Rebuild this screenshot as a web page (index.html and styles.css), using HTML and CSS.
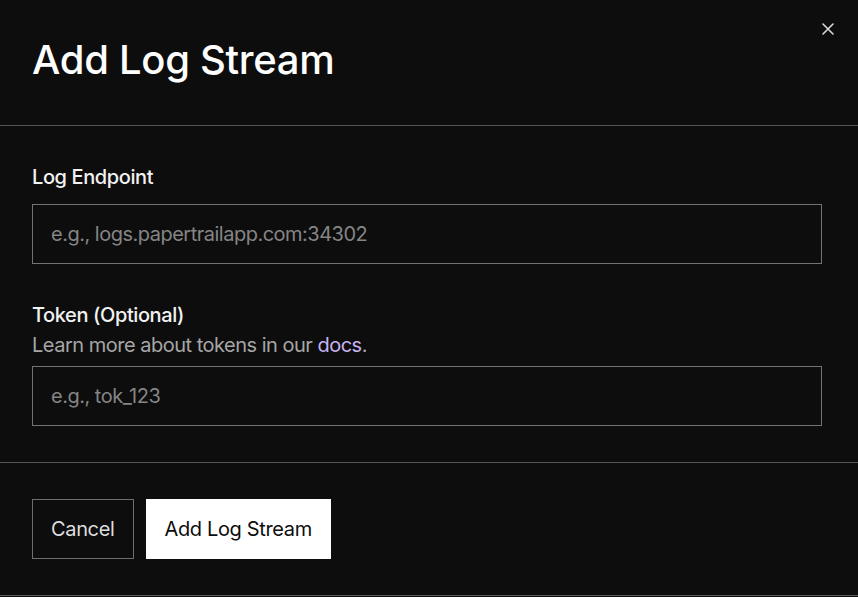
FILE: index.html
```
<!DOCTYPE html>
<html lang="en">
<head>
<meta charset="utf-8">
<title>Add Log Stream</title>
<link rel="stylesheet" href="styles.css">
</head>
<body>
<div class="modal">
  <header class="modal-header">
    <h1 class="modal-title">Add Log Stream</h1>
    <button class="close-btn" aria-label="Close">
      <svg width="14" height="14" viewBox="0 0 14 14"><path d="M2 2L12 12M12 2L2 12" stroke="#d8d8d8" stroke-width="1.6" fill="none" stroke-linecap="round"/></svg>
    </button>
  </header>
  <div class="modal-body">
    <div class="field">
      <label class="field-label">Log Endpoint</label>
      <input class="field-input" type="text" placeholder="e.g., logs.papertrailapp.com:34302">
    </div>
    <div class="field">
      <label class="field-label">Token (Optional)</label>
      <p class="field-help">Learn more about tokens in our <a class="link" href="#">docs</a>.</p>
      <input class="field-input" type="text" placeholder="e.g., tok_123">
    </div>
  </div>
  <footer class="modal-footer">
    <button class="btn btn-secondary">Cancel</button>
    <button class="btn btn-primary">Add Log Stream</button>
  </footer>
</div>
</body>
</html>
```
FILE: styles.css
```
* { box-sizing: border-box; }
html, body {
  margin: 0;
  padding: 0;
  background: #0d0d0d;
  font-family: Inter, "Noto Sans", sans-serif;
  color: #ffffff;
}
.modal {
  width: 858px;
  background: #0d0d0d;
  border-bottom: 1px solid #5a5a5a;
}
.modal-header {
  position: relative;
  padding: 36px 32px 41px;
  border-bottom: 1px solid #555555;
}
.modal-title {
  margin: 0;
  font-size: 40px;
  line-height: 48px;
  font-weight: 500;
  letter-spacing: -0.3px;
}
.close-btn {
  position: absolute;
  top: 22px;
  right: 23px;
  width: 14px;
  height: 14px;
  padding: 0;
  border: 0;
  background: none;
  display: flex;
}
.modal-body {
  padding: 36px 36px 36px 32px;
  display: flex;
  flex-direction: column;
  gap: 36px;
  border-bottom: 1px solid #555555;
}
.field {
  display: flex;
  flex-direction: column;
}
.field-label {
  font-size: 20px;
  line-height: 30px;
  font-weight: 500;
  letter-spacing: -0.4px;
  color: #f2f2f2;
  margin-bottom: 12px;
}
.field-label + .field-help { margin-top: -12px; }
.field-help {
  margin: 0 0 6px;
  font-size: 20px;
  line-height: 30px;
  letter-spacing: -0.5px;
  color: #a6a6a6;
}
.link {
  color: #c7b3f2;
  text-decoration: none;
}
.field-input {
  height: 60px;
  width: 100%;
  padding: 0 18px;
  border: 1px solid #727272;
  background: #0d0d0d;
  color: #fff;
  font-family: inherit;
  font-size: 20px;
  letter-spacing: -0.5px;
  outline: none;
  border-radius: 0;
}
.field-input::placeholder { color: #858585; }
.modal-footer {
  padding: 36px 32px;
  display: flex;
  gap: 12px;
}
.btn {
  height: 60px;
  padding: 0 18px;
  font-family: inherit;
  font-size: 20px;
  letter-spacing: -0.35px;
  border-radius: 0;
  cursor: pointer;
}
.btn-secondary {
  background: #0d0d0d;
  color: #dedede;
  border: 1px solid #6e6e6e;
}
.btn-primary {
  background: #ffffff;
  color: #0d0d0d;
  border: 1px solid #ffffff;
}
```
